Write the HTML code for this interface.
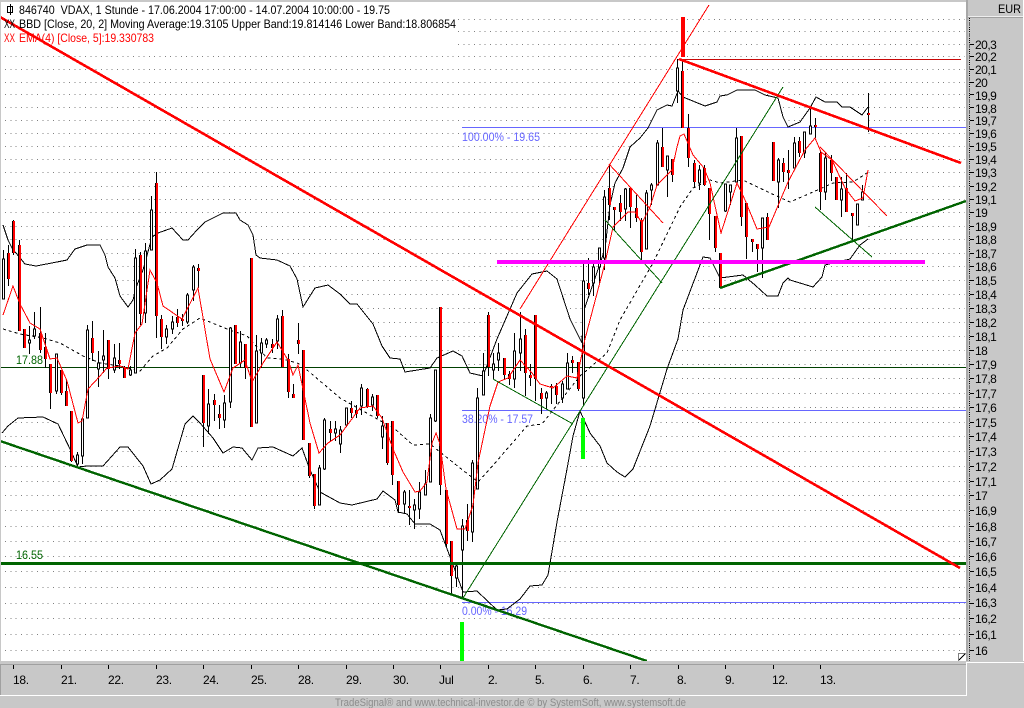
<!DOCTYPE html>
<html><head><meta charset="utf-8"><title>VDAX</title>
<style>
html,body{margin:0;padding:0;background:#c8c8c8;width:1024px;height:708px;overflow:hidden}
svg{display:block;font-family:"Liberation Sans",sans-serif}
.c{shape-rendering:crispEdges}
.y text{font-size:12px;letter-spacing:-.5px;fill:#000}
.x text{font-size:12px;letter-spacing:-.3px;fill:#000}
</style></head><body>
<svg width="1024" height="708" viewBox="0 0 1024 708" xmlns="http://www.w3.org/2000/svg">
<rect width="1024" height="708" fill="#c8c8c8"/>
<rect x="1" y="2" width="965" height="659" fill="#fff"/>
<!-- grid -->
<path class="c" fill="none" stroke="#808080" stroke-dasharray="1 4.33" d="M5 650.5H965M5 634.5H965M5 618.5H965M5 603.5H965M5 587.5H965M5 571.5H965M5 556.5H965M5 541.5H965M5 526.5H965M5 510.5H965M5 495.5H965M5 481.5H965M5 466.5H965M5 451.5H965M5 436.5H965M5 422.5H965M5 407.5H965M5 393.5H965M5 378.5H965M5 364.5H965M5 350.5H965M5 336.5H965M5 322.5H965M5 308.5H965M5 294.5H965M5 280.5H965M5 266.5H965M5 253.5H965M5 239.5H965M5 226.5H965M5 212.5H965M5 199.5H965M5 186.5H965M5 172.5H965M5 159.5H965M5 146.5H965M5 133.5H965M5 120.5H965M5 107.5H965M5 94.5H965M5 82.5H965M5 69.5H965M5 56.5H965M5 44.5H965M5 31.5H965M5 19.5H965"/>
<!-- legend background -->
<rect class="c" x="1" y="2" width="457" height="44" fill="#fff"/>
<!-- band fill -->
<polygon class="c" fill="#fff" points="3,225 8,240 13,250 16,253 25,264 36,266 57,262 67,260 75,249 87,245 100,245 105,255 108,267 115,278 120,296 128,307 133,300 137,285 143,270 152,237 158,233 172,228 183,240 188,240 197,230 205,222 223,213 236,213 240,220 248,225 253,235 256,255 260,258 277,260 290,266 297,279 303,307 315,288 328,285 340,294 350,304 357,304 373,324 382,346 390,358 400,359 405,372 430,368 437,358 453,351 462,356 470,373 483,376 497,339 517,293 532,274 547,271 557,279 570,319 582,343 583,313 605,249 610,205 615,183 623,168 630,147 640,138 648,128 657,110 667,105 672,106 678,91 683,97 705,106 717,102 720,96 727,95 737,90 755,90 765,95 778,98 783,117 788,127 800,122 810,108 816,97 825,102 837,102 842,107 850,107 862,115 868,107 868,239 860,245 850,259 825,265 822,277 813,287 790,280 788,278 783,283 778,296 767,296 755,285 743,275 720,278 710,258 703,257 683,310 678,339 667,369 650,426 633,469 625,477 617,472 607,463 600,446 590,433 580,411 573,436 567,469 557,522 548,575 542,585 530,586 520,599 507,609 497,610 477,591 463,592 452,562 440,530 430,524 415,524 407,514 398,512 395,500 383,491 377,499 352,505 340,503 320,492 310,470 302,448 293,456 273,447 258,448 252,460 242,448 233,447 223,453 213,438 200,423 193,416 185,424 172,469 160,480 151,484 143,466 128,447 120,447 103,466 87,466 78,467 70,449 58,424 43,417 18,418 8,426 2,433"/>
<!-- thin horizontal -->
<path class="c" fill="none" stroke="#004000" d="M1 367.5H966"/>
<path class="c" fill="none" stroke="#6666ff" d="M462 127.5H966M462 410.5H966M462 602.5H966"/>
<path class="c" fill="none" stroke="#c80808" d="M678 59.5H961"/>
<text x="462" y="141" font-size="12" fill="#6666ff" textLength="78" lengthAdjust="spacingAndGlyphs">100.00% - 19.65</text>
<text x="462" y="423" font-size="12" fill="#6666ff" textLength="71" lengthAdjust="spacingAndGlyphs">38.20% - 17.57</text>
<text x="462" y="615" font-size="12" fill="#6666ff" textLength="65" lengthAdjust="spacingAndGlyphs">0.00% - 16.29</text>
<text x="16" y="364" font-size="12" fill="#006400" textLength="27" lengthAdjust="spacingAndGlyphs">17.88</text>
<text x="16" y="559" font-size="12" fill="#006400" textLength="27" lengthAdjust="spacingAndGlyphs">16.55</text>
<!-- bollinger lines -->
<polyline class="c" fill="none" stroke="#000" points="3,225 8,240 13,250 16,253 25,264 36,266 57,262 67,260 75,249 87,245 100,245 105,255 108,267 115,278 120,296 128,307 133,300 137,285 143,270 152,237 158,233 172,228 183,240 188,240 197,230 205,222 223,213 236,213 240,220 248,225 253,235 256,255 260,258 277,260 290,266 297,279 303,307 315,288 328,285 340,294 350,304 357,304 373,324 382,346 390,358 400,359 405,372 430,368 437,358 453,351 462,356 470,373 483,376 497,339 517,293 532,274 547,271 557,279 570,319 582,343 583,313 605,249 610,205 615,183 623,168 630,147 640,138 648,128 657,110 667,105 672,106 678,91 683,97 705,106 717,102 720,96 727,95 737,90 755,90 765,95 778,98 783,117 788,127 800,122 810,108 816,97 825,102 837,102 842,107 850,107 862,115 868,107"/>
<polyline class="c" fill="none" stroke="#000" points="2,433 8,426 18,418 43,417 58,424 70,449 78,467 87,466 103,466 120,447 128,447 143,466 151,484 160,480 172,469 185,424 193,416 200,423 213,438 223,453 233,447 242,448 252,460 258,448 273,447 293,456 302,448 310,470 320,492 340,503 352,505 377,499 383,491 395,500 398,512 407,514 415,524 430,524 440,530 452,562 463,592 477,591 497,610 507,609 520,599 530,586 542,585 548,575 557,522 567,469 573,436 580,411 590,433 600,446 607,463 617,472 625,477 633,469 650,426 667,369 678,339 683,310 703,257 710,258 720,278 743,275 755,285 767,296 778,296 783,283 788,278 790,280 813,287 822,277 825,265 850,259 860,245 868,239"/>
<polyline class="c" fill="none" stroke="#000" stroke-dasharray="3 3" points="3,329 20,334 43,338 60,343 83,356 100,363 120,366 140,371 153,356 167,348 183,329 200,318 227,329 247,336 267,358 283,359 300,364 340,398 395,429 413,445 430,444 460,468 478,482 495,463 527,426 542,424 580,376 607,353 620,320 653,263 680,207 693,188 710,180 720,183 743,180 770,193 790,202 813,192 833,183 853,182 867,173"/>
<!-- wicks -->
<path class="c" fill="none" stroke="#000" d="M3.5 250V299M8.5 245V286M13.5 220V255M19.5 240V331M24.5 329V348M29.5 326V354M34.5 312V339M40.5 307V353M45.5 333V368M50.5 364V409M56.5 354V394M61.5 370V395M66.5 380V406M71.5 411V462M77.5 452V466M82.5 419V464M87.5 325V418M92.5 321V361M98.5 351V387M103.5 330V373M108.5 340V379M114.5 344V373M119.5 343V369M124.5 366V378M130.5 366V376M135.5 249V373M140.5 252V325M145.5 243V323M151.5 196V250M156.5 172V338M161.5 315V349M166.5 325V344M172.5 316V334M177.5 309V327M182.5 314V326M187.5 293V324M193.5 265V301M198.5 264V288M203.5 375V447M208.5 389V434M214.5 394V421M219.5 405V429M224.5 395V428M230.5 327V408M235.5 325V364M240.5 331V368M245.5 344V379M251.5 258V427M256.5 335V423M261.5 338V368M266.5 338V348M272.5 339V353M277.5 315V349M282.5 310V367M288.5 354V398M293.5 384V398M298.5 323V354M303.5 350V440M309.5 443V478M314.5 474V509M319.5 465V505M324.5 418V470M330.5 421V441M335.5 421V441M340.5 426V453M346.5 408V427M351.5 401V418M356.5 405V418M361.5 384V415M367.5 388V408M372.5 394V411M377.5 395V418M382.5 416V449M387.5 423V465M392.5 421V485M398.5 481V513M404.5 490V514M409.5 490V525M414.5 499V529M419.5 482V519M425.5 470V495M430.5 414V482M435.5 370V422M440.5 307V495M446.5 490V548M451.5 541V594M456.5 562V587M462.5 519V599M467.5 504V541M472.5 460V542M477.5 388V489M483.5 353V395M488.5 312V376M493.5 353V379M498.5 343V371M504.5 358V379M509.5 371V385M514.5 333V388M520.5 312V371M525.5 329V396M530.5 364V386M535.5 315V401M541.5 388V414M546.5 391V409M551.5 384V404M556.5 383V404M562.5 381V403M567.5 353V389M572.5 356V373M578.5 362V391M583.5 264V406M588.5 258V295M593.5 262V296M599.5 248V285M604.5 190V270M609.5 165V220M614.5 207V230M620.5 195V221M625.5 188V221M630.5 188V228M636.5 195V222M641.5 218V260M646.5 190V249M651.5 183V205M657.5 140V185M662.5 128V167M667.5 156V197M672.5 159V182M677.5 59V103M682.5 60V128M688.5 114V167M694.5 160V188M699.5 165V190M704.5 165V186M709.5 188V240M715.5 216V252M720.5 253V288M725.5 184V212M730.5 185V205M736.5 128V182M741.5 136V226M746.5 203V259M752.5 239V252M757.5 244V272M762.5 218V278M767.5 213V240M773.5 142V181M778.5 158V208M783.5 158V182M788.5 150V189M794.5 137V168M799.5 137V157M804.5 132V158M810.5 107V134M815.5 118V138M820.5 150V210M825.5 152V200M831.5 155V181M836.5 177V200M841.5 177V217M846.5 173V212M852.5 213V241M857.5 204V225M862.5 185V200M868.5 93V132"/>
<!-- white bodies -->
<path class="c" fill="#fff" stroke="#000" d="M2.5 259h2V299h-2zM28.5 340h2V343h-2zM33.5 329h2V336h-2zM55.5 354h2V391h-2zM76.5 455h2V464h-2zM81.5 419h2V456h-2zM86.5 330h2V418h-2zM97.5 363h2V369h-2zM102.5 356h2V360h-2zM113.5 358h2V370h-2zM129.5 370h2V375h-2zM134.5 258h2V373h-2zM144.5 251h2V313h-2zM150.5 210h2V250h-2zM165.5 329h2V337h-2zM171.5 322h2V329h-2zM186.5 295h2V322h-2zM192.5 267h2V290h-2zM207.5 404h2V426h-2zM223.5 403h2V420h-2zM229.5 328h2V402h-2zM239.5 342h2V363h-2zM255.5 351h2V423h-2zM260.5 343h2V353h-2zM265.5 340h2V344h-2zM276.5 319h2V341h-2zM318.5 468h2V505h-2zM323.5 420h2V469h-2zM334.5 429h2V433h-2zM339.5 430h2V444h-2zM345.5 408h2V425h-2zM360.5 388h2V406h-2zM371.5 397h2V405h-2zM381.5 426h2V437h-2zM403.5 492h2V504h-2zM413.5 505h2V510h-2zM418.5 492h2V509h-2zM424.5 484h2V495h-2zM429.5 418h2V482h-2zM434.5 370h2V421h-2zM455.5 566h2V578h-2zM461.5 526h2V550h-2zM471.5 463h2V532h-2zM476.5 398h2V489h-2zM482.5 371h2V395h-2zM492.5 364h2V370h-2zM497.5 353h2V360h-2zM513.5 351h2V379h-2zM519.5 339h2V353h-2zM545.5 393h2V398h-2zM561.5 384h2V398h-2zM566.5 363h2V389h-2zM582.5 281h2V398h-2zM592.5 267h2V283h-2zM598.5 248h2V267h-2zM603.5 197h2V258h-2zM624.5 189h2V209h-2zM645.5 193h2V249h-2zM650.5 185h2V190h-2zM656.5 143h2V185h-2zM666.5 156h2V170h-2zM676.5 68h2V91h-2zM698.5 170h2V183h-2zM724.5 184h2V211h-2zM729.5 185h2V192h-2zM735.5 138h2V182h-2zM761.5 218h2V248h-2zM777.5 160h2V182h-2zM793.5 143h2V168h-2zM803.5 132h2V153h-2zM809.5 126h2V134h-2zM824.5 158h2V192h-2zM840.5 189h2V200h-2zM856.5 204h2V225h-2zM861.5 192h2V200h-2z"/>
<!-- red bodies -->
<g class="c" fill="none" stroke="#000" stroke-width="3"><path id="r" d="M8.5 253V279M13.5 221V253M19.5 245V331M24.5 329V348M40.5 333V350M45.5 347V359M50.5 364V393M61.5 370V393M66.5 391V406M71.5 411V461M92.5 338V353M108.5 340V369M119.5 360V364M124.5 367V378M140.5 255V314M156.5 183V316M161.5 319V337M177.5 317V323M182.5 319V321M198.5 268V271M203.5 375V423M214.5 400V405M219.5 414V418M235.5 325V364M245.5 344V368M251.5 258V427M272.5 344V348M282.5 316V367M288.5 359V392M293.5 394V398M298.5 340V344M303.5 350V440M309.5 443V476M314.5 474V506M330.5 429V433M351.5 408V413M356.5 410V414M367.5 389V407M377.5 395V416M387.5 423V463M392.5 421V475M398.5 481V505M409.5 506V508M440.5 307V485M446.5 490V544M451.5 541V576M467.5 520V531M488.5 315V367M504.5 358V375M509.5 374V379M525.5 335V373M530.5 375V378M535.5 315V379M541.5 393V399M551.5 386V387M556.5 386V395M572.5 360V363M578.5 362V389M588.5 283V289M609.5 188V205M614.5 207V210M620.5 203V212M630.5 188V207M636.5 208V218M641.5 220V252M662.5 147V167M672.5 159V175M682.5 71V128M688.5 128V158M694.5 163V182M704.5 168V185M709.5 188V214M715.5 216V248M720.5 253V288M741.5 136V217M746.5 203V237M752.5 239V242M757.5 244V249M767.5 217V240M773.5 142V181M783.5 163V172M788.5 170V173M799.5 141V153M815.5 125V127M820.5 153V192M831.5 160V173M836.5 177V200M846.5 188V212M852.5 213V216M868.5 113V115"/></g>
<g class="c" fill="none" stroke="#f00" stroke-width="2" transform="translate(.5 0)"><use href="#r"/></g>
<!-- EMA -->
<polyline class="c" fill="none" stroke="#f00" points="3,315 13,286 20,304 30,323 40,329 50,359 57,358 67,381 78,423 82,421 88,389 100,376 107,368 120,366 128,369 135,333 142,324 150,270 157,283 163,306 182,319 198,288 210,359 224,392 233,368 245,360 252,382 263,363 277,342 288,360 293,375 298,365 310,423 319,453 328,443 340,435 360,408 373,406 382,418 393,449 403,472 415,492 420,491 427,482 432,443 436,433 440,444 446,489 457,529 465,529 473,505 478,463 490,406 498,382 508,378 520,360 532,373 540,384 553,388 567,376 577,378 585,339 590,320 605,263 613,227 628,212 635,212 642,223 650,207 657,185 672,170 677,147 680,136 684,134 693,155 704,168 710,183 721,233 737,183 745,200 757,229 769,227 788,182 805,150 815,138 821,152 832,160 845,188 855,201 863,198 868,170"/>
<!-- thin channel lines -->
<path class="c" fill="none" stroke="#f00" d="M520 309L709 5M609 164L663 223M820 147L887 216"/>
<path class="c" fill="none" stroke="#006400" d="M463 598L783 87M493 379L573 424M605 220L662 283M815 207L872 257"/>
<!-- thick lines -->
<rect class="c" x="1" y="562" width="965" height="3" fill="#006400"/>
<path class="c" fill="none" stroke="#006400" stroke-width="2.4" d="M0 441L647 661M720 288L966 201"/>
<path class="c" fill="none" stroke="#f00" stroke-width="2.6" d="M0 17L960 568M679 59L961 163"/>
<rect class="c" x="497" y="260" width="428" height="4" fill="#f0f"/>
<rect class="c" x="681" y="17" width="4" height="40" fill="#f00"/>
<rect class="c" x="581" y="418" width="4" height="41" fill="#0f0"/>
<rect class="c" x="460" y="622" width="4" height="39" fill="#0f0"/>
<!-- header text -->
<rect class="c" x="7.5" y="6.5" width="5" height="6" fill="none" stroke="#000"/>
<path class="c" stroke="#000" d="M10.5 4V15"/>
<text x="19" y="14" font-size="12" fill="#000" textLength="371" lengthAdjust="spacingAndGlyphs" xml:space="preserve">846740  VDAX, 1 Stunde - 17.06.2004 17:00:00 - 14.07.2004 10:00:00 - 19.75</text>
<text x="4" y="28" font-size="12" fill="#000" textLength="11" lengthAdjust="spacingAndGlyphs">XX</text>
<text x="19" y="28" font-size="12" fill="#000" textLength="437" lengthAdjust="spacingAndGlyphs">BBD [Close, 20, 2] Moving Average:19.3105 Upper Band:19.814146 Lower Band:18.806854</text>
<text x="4" y="42" font-size="12" fill="#f00" textLength="11" lengthAdjust="spacingAndGlyphs">XX</text>
<text x="19" y="42" font-size="12" fill="#f00" textLength="135" lengthAdjust="spacingAndGlyphs">EMA(4) [Close, 5]:19.330783</text>
<!-- resize icon -->
<path class="c" fill="#fff" stroke="#808080" d="M958.5 653.5H965.5L958.5 660.5Z"/>
<path class="c" fill="none" stroke="#000" d="M965 654L959 660"/>
<!-- chrome -->
<rect class="c" x="0" y="0" width="1024" height="2" fill="#c8c8c8"/>
<rect class="c" x="0" y="0" width="1" height="661" fill="#c8c8c8"/>
<rect class="c" x="966" y="0" width="57" height="662" fill="#c8c8c8"/>
<rect class="c" x="966" y="0" width="2" height="661" fill="#a8a8a8"/>
<rect class="c" x="1023" y="0" width="1" height="662" fill="#fff"/>
<rect class="c" x="968" y="16" width="55" height="1" fill="#eee"/>
<rect class="c" x="968" y="17" width="55" height="1" fill="#a0a0a0"/>
<text x="1021" y="13" font-size="12" text-anchor="end" fill="#000" textLength="23" lengthAdjust="spacingAndGlyphs">EUR</text>
<path class="c" fill="none" stroke="#000" stroke-dasharray="1 1.2" d="M969.5 18V661"/>
<path class="c" fill="none" stroke="#000" d="M970 650.5h4M970 634.5h4M970 618.5h4M970 603.5h4M970 587.5h4M970 571.5h4M970 556.5h4M970 541.5h4M970 526.5h4M970 510.5h4M970 495.5h4M970 481.5h4M970 466.5h4M970 451.5h4M970 436.5h4M970 422.5h4M970 407.5h4M970 393.5h4M970 378.5h4M970 364.5h4M970 350.5h4M970 336.5h4M970 322.5h4M970 308.5h4M970 294.5h4M970 280.5h4M970 266.5h4M970 253.5h4M970 239.5h4M970 226.5h4M970 212.5h4M970 199.5h4M970 186.5h4M970 172.5h4M970 159.5h4M970 146.5h4M970 133.5h4M970 120.5h4M970 107.5h4M970 94.5h4M970 82.5h4M970 69.5h4M970 56.5h4M970 44.5h4"/>
<g class="y">
<text x="975" y="49">20,3</text><text x="975" y="61">20,2</text><text x="975" y="74">20,1</text><text x="975" y="87">20</text><text x="975" y="100">19,9</text><text x="975" y="113">19,8</text><text x="975" y="125">19,7</text><text x="975" y="138">19,6</text><text x="975" y="151">19,5</text><text x="975" y="164">19,4</text><text x="975" y="177">19,3</text><text x="975" y="191">19,2</text><text x="975" y="204">19,1</text><text x="975" y="217">19</text><text x="975" y="231">18,9</text><text x="975" y="244">18,8</text><text x="975" y="258">18,7</text><text x="975" y="271">18,6</text><text x="975" y="285">18,5</text><text x="975" y="299">18,4</text><text x="975" y="313">18,3</text><text x="975" y="327">18,2</text><text x="975" y="341">18,1</text><text x="975" y="355">18</text><text x="975" y="369">17,9</text><text x="975" y="383">17,8</text><text x="975" y="398">17,7</text><text x="975" y="412">17,6</text><text x="975" y="427">17,5</text><text x="975" y="441">17,4</text><text x="975" y="456">17,3</text><text x="975" y="471">17,2</text><text x="975" y="486">17,1</text><text x="975" y="500">17</text><text x="975" y="515">16,9</text><text x="975" y="531">16,8</text><text x="975" y="546">16,7</text><text x="975" y="561">16,6</text><text x="975" y="576">16,5</text><text x="975" y="592">16,4</text><text x="975" y="607">16,3</text><text x="975" y="623">16,2</text><text x="975" y="639">16,1</text><text x="975" y="655">16</text>
</g>
<!-- bottom bar -->
<rect class="c" x="0" y="661" width="1024" height="47" fill="#c8c8c8"/>
<rect class="c" x="1" y="664" width="965" height="1" fill="#a0a0a0"/>
<rect class="c" x="0" y="664" width="1" height="31" fill="#a0a0a0"/>
<rect class="c" x="966" y="662" width="58" height="1" fill="#fff"/>
<rect class="c" x="966" y="663" width="1" height="33" fill="#fff"/>
<rect class="c" x="0" y="695" width="967" height="1" fill="#fff"/>
<path class="c" fill="none" stroke="#000" d="M13.5 665v4M61.5 665v4M108.5 665v4M156.5 665v4M203.5 665v4M251.5 665v4M298.5 665v4M346.5 665v4M393.5 665v4M440.5 665v4M488.5 665v4M535.5 665v4M583.5 665v4M630.5 665v4M678.5 665v4M725.5 665v4M773.5 665v4M820.5 665v4"/>
<g class="x">
<text x="13" y="684">18.</text><text x="61" y="684">21.</text><text x="108" y="684">22.</text><text x="156" y="684">23.</text><text x="203" y="684">24.</text><text x="251" y="684">25.</text><text x="298" y="684">28.</text><text x="346" y="684">29.</text><text x="393" y="684">30.</text><text x="439" y="684">Jul</text><text x="488" y="684">2.</text><text x="535" y="684">5.</text><text x="583" y="684">6.</text><text x="630" y="684">7.</text><text x="677" y="684">8.</text><text x="725" y="684">9.</text><text x="772" y="684">12.</text><text x="820" y="684">13.</text>
</g>
<text x="335" y="706" font-size="11" fill="#8c8c8c" textLength="351" lengthAdjust="spacingAndGlyphs">TradeSignal® and www.technical-investor.de © by SystemSoft, www.systemsoft.de</text>
</svg>
</body></html>
